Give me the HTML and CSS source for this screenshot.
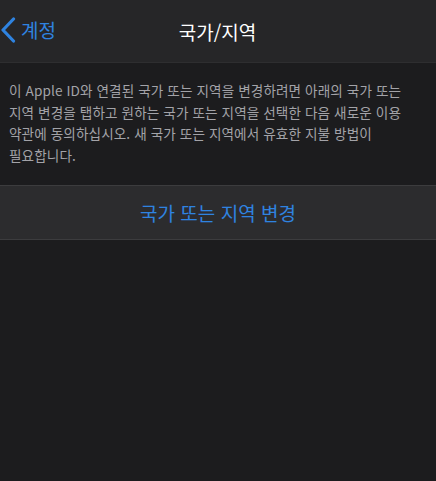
FILE: index.html
```html
<!DOCTYPE html>
<html lang="ko">
<head>
    <meta charset="UTF-8">
    <meta name="viewport" content="width=device-width, initial-scale=1.0">
    <title>국가/지역</title>
    <link rel="stylesheet" href="styles.css">
</head>
<body>
    <div class="navbar">
        <div class="back">
            <svg class="chevron" width="16" height="26" viewBox="0 0 16 26">
                <path d="M13.5 2 L3 13 L13.5 24" fill="none" stroke="#2f83e0" stroke-width="3.2" stroke-linecap="round" stroke-linejoin="round"/>
            </svg>
            <span>계정</span>
        </div>
        <div class="title">국가/지역</div>
    </div>

    <p class="desc">이 Apple ID와 연결된 국가 또는 지역을 변경하려면 아래의 국가 또는 지역 변경을 탭하고 원하는 국가 또는 지역을 선택한 다음 새로운 이용 약관에 동의하십시오. 새 국가 또는 지역에서 유효한 지불 방법이 필요합니다.</p>

    <div class="group">
        <div class="row-button">국가 또는 지역 변경</div>
    </div>
</body>
</html>
```

FILE: styles.css
```css
body {
    margin: 0;
    background-color: #1c1c1e;
    font-family: "Noto Sans CJK KR", "Noto Sans", sans-serif;
    color: white;
}
.navbar {
    position: relative;
    height: 62px;
    background-color: #262628;
    border-bottom: 1px solid #2e2e30;
    display: flex;
    align-items: center;
    justify-content: center;
}
.back {
    position: absolute;
    left: 0;
    top: 16px;
    display: flex;
    align-items: center;
    gap: 5px;
    color: #2f83e0;
    font-size: 19px;
}
.chevron {
    display: block;
}
.title {
    font-size: 19px;
    font-weight: 400;
    margin-left: -1px;
}
.desc {
    margin: 17px 14px 0 9px;
    font-size: 13.6px;
    letter-spacing: 0.1px;
    line-height: 21.7px;
    color: #a3a3a8;
    word-break: keep-all;
}
.group {
    margin-top: 18px;
    background-color: #2c2c2e;
    border-top: 1px solid #3c3c3e;
    border-bottom: 1px solid #3c3c3e;
}
.row-button {
    height: 53px;
    display: flex;
    align-items: center;
    justify-content: center;
    color: #2f83e0;
    font-size: 19px;
}
```
